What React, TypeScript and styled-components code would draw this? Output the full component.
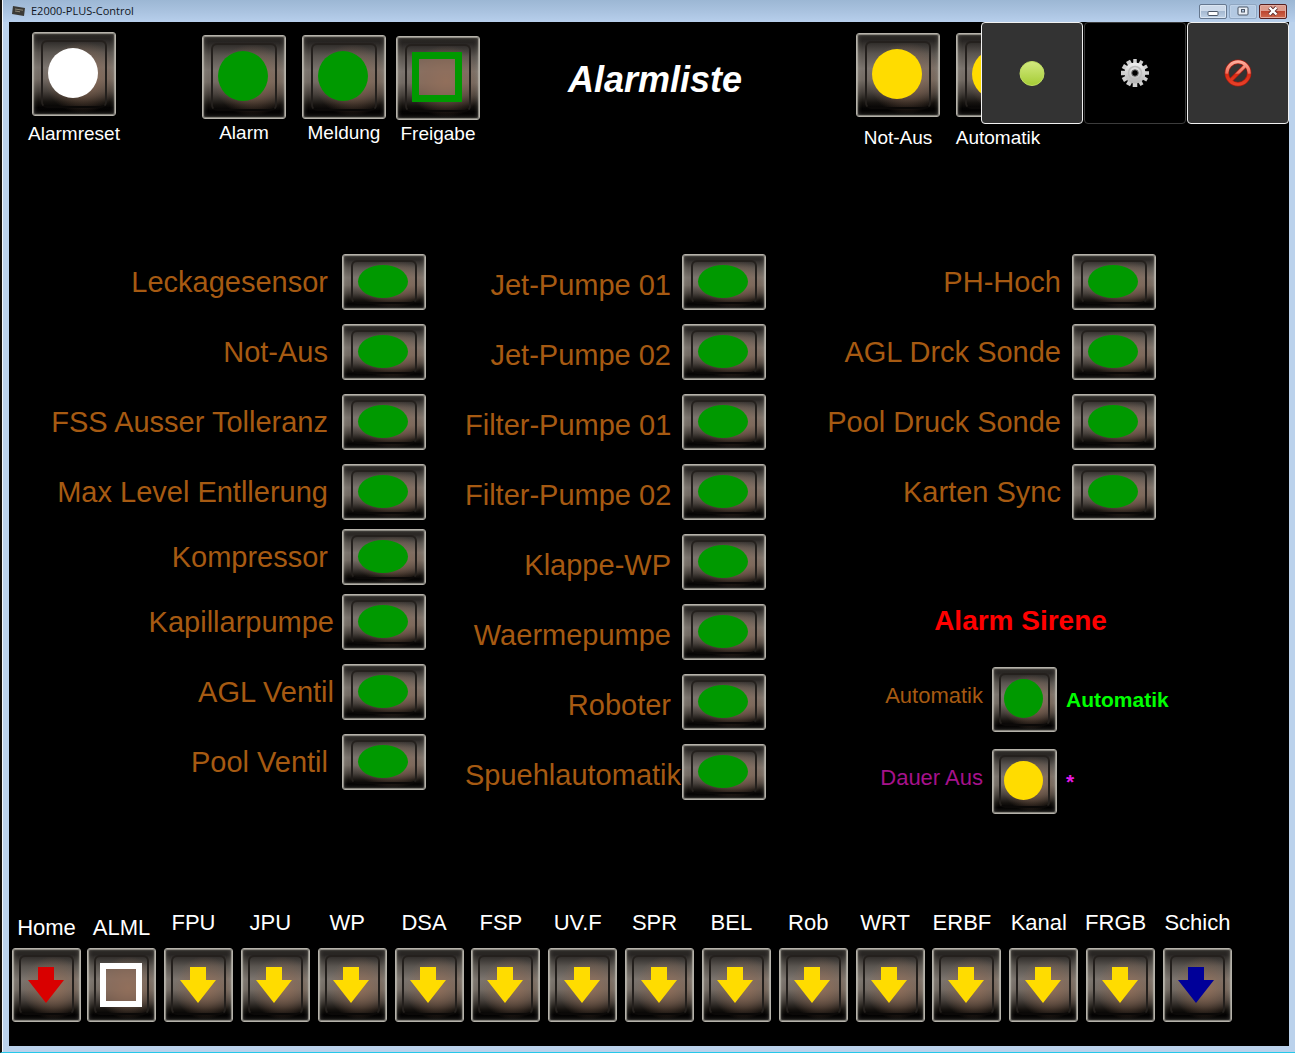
import React, { useId } from "react";
import styled, { createGlobalStyle, css } from "styled-components";

const GlobalStyle = createGlobalStyle`
  *, *::before, *::after { box-sizing: border-box; }
  html, body { margin: 0; padding: 0; background: #000; }
  body { font-family: "Liberation Sans", Arial, Helvetica, sans-serif; }
  button { font: inherit; padding: 0; margin: 0; cursor: pointer; }
`;

const color = {
  green: "#009900",
  yellow: "#ffdc00",
  white: "#ffffff",
  red: "#d90000",
  blue: "#000099",
  brown: "#a65a12",
};

/* ---------- Window frame ---------- */

const Window = styled.div`
  min-height: 100vh;
  display: flex;
  flex-direction: column;
  background: #bbd2ec;
  border-left: 2px solid #15110c;
  border-bottom: 1px solid #25c8ea;
  box-shadow: inset 1px 0 0 #f4f8fc;
  padding: 0 6px 6px 7px;
`;

const TitleBar = styled.header`
  height: 22px;
  margin: 0 -6px 0 -6px;
  padding: 0 8px 0 9px;
  display: flex;
  align-items: center;
  gap: 6px;
  background: linear-gradient(#9cb7d4, #a9c2df 50%, #b7cfec);
  font-family: "Open Sans", "Noto Sans", sans-serif;
  font-size: 11px;
  line-height: 22px;
  color: #10161e;
`;

const TitleText = styled.span`
  flex: 1;
  white-space: nowrap;
`;

const WindowControls = styled.div`
  display: flex;
  gap: 2px;
`;

const WindowButton = styled.button<{ $tone?: "plain" | "faded" | "close" }>`
  width: 28px;
  height: 15px;
  display: flex;
  align-items: center;
  justify-content: center;
  border-radius: 2px;
  border: 1px solid #66788f;
  background: linear-gradient(#cddaea 50%, #a5b9d1 50%, #c0d3e8);
  box-shadow: inset 0 0 0 1px #dbe6f2;
  ${(p) =>
    p.$tone === "faded" &&
    css`
      border-color: #8fa6c1;
      background: #b3c9e2;
      box-shadow: inset 0 0 0 1px #bfd2e8;
    `}
  ${(p) =>
    p.$tone === "close" &&
    css`
      border-color: #57201f;
      background: linear-gradient(#dd9c8d 50%, #bd4630 50%, #cf6a4e);
      box-shadow: inset 0 0 0 1px #e3aca0;
    `}
`;

const Screen = styled.div`
  flex: 1;
  position: relative;
  display: flex;
  flex-direction: column;
  background: #000;
  padding-bottom: 24px;
`;

/* ---------- Illuminated push button ---------- */

type Size = "large" | "wide" | "medium" | "nav";

const tileSize = {
  large: { w: 84, h: 84, inset: 7 },
  wide: { w: 84, h: 56, inset: 5 },
  medium: { w: 65, h: 65, inset: 5 },
  nav: { w: 69, h: 74, inset: 6 },
};

const lampSize = {
  large: { w: 50, h: 50, ring: 7 },
  wide: { w: 50, h: 33, ring: 6 },
  medium: { w: 39, h: 39, ring: 5 },
  nav: { w: 42, h: 44, ring: 6 },
};

const TileButton = styled.button<{ $size: Size }>`
  flex: none;
  width: ${(p) => tileSize[p.$size].w}px;
  height: ${(p) => tileSize[p.$size].h}px;
  position: relative;
  display: flex;
  align-items: center;
  justify-content: center;
  padding: 0 2px ${(p) => (p.$size === "nav" ? 0 : 2)}px 0;
  border: 1px solid #b5b2aa;
  border-radius: 3px;
  background:
    radial-gradient(ellipse 46% 44% at 60% 54%, rgba(150, 112, 88, 0.85), rgba(134, 102, 82, 0.5) 55%, transparent),
    linear-gradient(#1d1b19, #2b2826 9%, #5a5550 24%, #7b746e 42%, #736b64 56%, #47413c 71%, #15120f 84%, #040303 91%, #060505);
  box-shadow:
    inset 0 0 1px 1px rgba(200, 196, 186, 0.65),
    inset 0 0 4px 1px rgba(190, 186, 176, 0.3);

  &::before {
    content: "";
    position: absolute;
    inset: ${(p) => tileSize[p.$size].inset}px ${(p) => (p.$size === "nav" || p.$size === "medium" ? 6 : 8)}px;
    border: 2px solid #24201d;
    border-bottom-color: #0b0908;
    border-radius: 6px;
  }
`;

const Lamp = styled.span<{ $size: Size; $color: string; $shape: "disc" | "frame" }>`
  position: relative;
  width: ${(p) => lampSize[p.$size].w}px;
  height: ${(p) => lampSize[p.$size].h}px;
  ${(p) =>
    p.$shape === "disc"
      ? css`
          border-radius: 50%;
          background: ${p.$color};
        `
      : css`
          border: ${lampSize[p.$size].ring}px solid ${p.$color};
          background: rgba(146, 112, 92, 0.55);
        `}
`;

const ArrowSvg = styled.svg`
  position: relative;
  display: block;
`;

const Arrow = ({ fill }: { fill: string }) => (
  <ArrowSvg width="36" height="36" viewBox="0 0 36 36" aria-hidden="true">
    <path d="M10 0H26V13H36L18 36L0 13H10Z" fill={fill} />
  </ArrowSvg>
);

type TileProps = {
  size: Size;
  tint: string;
  shape?: "disc" | "frame" | "arrow";
  labelledBy: string;
};

const Tile = ({ size, tint, shape = "disc", labelledBy }: TileProps) => (
  <TileButton type="button" $size={size} aria-labelledby={labelledBy}>
    {shape === "arrow" ? <Arrow fill={tint} /> : <Lamp $size={size} $color={tint} $shape={shape} />}
  </TileButton>
);

/* ---------- Top bar ---------- */

const TopBar = styled.div`
  display: flex;
  align-items: flex-start;
  padding: 10px 249px 0 23px;
`;

const TopGroup = styled.div<{ $drop?: number; $before?: number; $labelGap: number }>`
  display: flex;
  gap: 16px;
  padding-top: ${(p) => p.$drop ?? 0}px;
  margin-left: ${(p) => p.$before ?? 0}px;
  --label-gap: ${(p) => p.$labelGap}px;
`;

const TopItemBox = styled.div`
  width: 84px;
  display: flex;
  flex-direction: column;
  align-items: center;
  gap: var(--label-gap);
`;

const TopLabel = styled.span`
  font-size: 19px;
  line-height: 22px;
  color: #fff;
  white-space: nowrap;
`;

const Title = styled.h1`
  flex: 1;
  margin: 0;
  padding: 27px 26px 0 0;
  text-align: center;
  font-size: 36px;
  line-height: 42px;
  font-style: italic;
  font-weight: 700;
  color: #fff;
`;

const TopItem = ({ label, tint, shape }: { label: string; tint: string; shape?: "disc" | "frame" }) => {
  const id = useId();
  return (
    <TopItemBox>
      <Tile size="large" tint={tint} shape={shape} labelledBy={id} />
      <TopLabel id={id}>{label}</TopLabel>
    </TopItemBox>
  );
};

/* ---------- Overlay toolbar ---------- */

const Overlay = styled.div`
  position: absolute;
  top: 0;
  right: 0;
  display: flex;
  gap: 1px;
`;

const OverlayButton = styled.button<{ $dark?: boolean }>`
  width: 102px;
  height: 102px;
  display: flex;
  align-items: center;
  justify-content: center;
  border-radius: 4px;
  border: 1px solid ${(p) => (p.$dark ? "#3c3c3c" : "#f2f2f2")};
  background: ${(p) => (p.$dark ? "#000" : "#333")};
`;

const StatusIcon = () => (
  <svg width="28" height="28" viewBox="0 0 28 28" aria-hidden="true">
    <defs>
      <linearGradient id="statusFill" x1="0" y1="0" x2="0" y2="1">
        <stop offset="0" stopColor="#d3ea80" />
        <stop offset="1" stopColor="#a5cc35" />
      </linearGradient>
    </defs>
    <circle cx="14" cy="14.5" r="12" fill="url(#statusFill)" stroke="#c0de62" />
  </svg>
);

const GearIcon = () => (
  <svg width="28" height="28" viewBox="0 0 28 28" aria-hidden="true">
    <defs>
      <linearGradient id="gearFill" x1="0" y1="0" x2="0" y2="1">
        <stop offset="0" stopColor="#f0f0f0" />
        <stop offset="1" stopColor="#b4b4b4" />
      </linearGradient>
    </defs>
    <g fill="url(#gearFill)">
      {[0, 30, 60, 90, 120, 150].map((a) => (
        <path key={a} d="M12.3 0H15.7L16.3 28H11.7Z" transform={`rotate(${a} 14 14)`} fill="#d0d0d0" />
      ))}
      <circle cx="14" cy="14" r="10.5" />
    </g>
    <circle cx="14" cy="14" r="6.5" fill="none" stroke="#bcbcbc" strokeWidth="1.5" />
    <circle cx="14" cy="14" r="3.3" fill="#000" stroke="#777" />
  </svg>
);

const BlockIcon = () => (
  <svg width="28" height="28" viewBox="0 0 28 28" aria-hidden="true">
    <defs>
      <linearGradient id="blockStroke" gradientUnits="userSpaceOnUse" x1="0" y1="1" x2="0" y2="27">
        <stop offset="0" stopColor="#ffb4a4" />
        <stop offset="0.5" stopColor="#f0705c" />
        <stop offset="0.56" stopColor="#dc2c14" />
        <stop offset="1" stopColor="#e8442c" />
      </linearGradient>
    </defs>
    <g fill="none" strokeLinecap="butt">
      <circle cx="14" cy="14" r="11.2" stroke="#a81d10" strokeWidth="4.4" />
      <path d="M21.5 6.5L6.5 21.5" stroke="#a81d10" strokeWidth="4.4" />
      <circle cx="14" cy="14" r="11.2" stroke="url(#blockStroke)" strokeWidth="3" />
      <path d="M21.5 6.5L6.5 21.5" stroke="url(#blockStroke)" strokeWidth="3" />
    </g>
  </svg>
);

/* ---------- Alarm lists ---------- */

const Main = styled.main`
  display: grid;
  grid-template-columns: 417fr 340fr 390fr 133fr;
  grid-template-rows: auto 1fr;
  padding-top: 105px;
`;

const AlarmColumn = styled.section<{ $tall?: boolean }>`
  display: flex;
  flex-direction: column;
  gap: 9px;
  grid-row: ${(p) => (p.$tall ? "1 / span 2" : "1")};
`;

const AlarmGroup = styled.ul`
  list-style: none;
  margin: 0;
  padding: 0;
  display: flex;
  flex-direction: column;
  gap: 14px;
`;

type Spacing = "wide" | "normal" | "near";

const rowGap = { wide: 14, normal: 11, near: 8 };

const AlarmRow = styled.li<{ $spacing: Spacing }>`
  height: 56px;
  display: flex;
  align-items: center;
  justify-content: flex-end;
  gap: ${(p) => rowGap[p.$spacing]}px;
`;

const AlarmLabel = styled.span<{ $narrow?: boolean }>`
  ${(p) =>
    p.$narrow &&
    css`
      width: 206px;
      padding-top: 6px;
    `}
  text-align: right;
  font-size: 29px;
  line-height: 34px;
  color: ${color.brown};
  white-space: nowrap;
`;

type Alarm = { name: string; spacing: Spacing };

const AlarmEntry = ({ alarm, narrow }: { alarm: Alarm; narrow?: boolean }) => {
  const id = useId();
  return (
    <AlarmRow $spacing={alarm.spacing}>
      <AlarmLabel id={id} $narrow={narrow}>
        {alarm.name}
      </AlarmLabel>
      <Tile size="wide" tint={color.green} labelledBy={id} />
    </AlarmRow>
  );
};

const alarms = (spacing: Spacing, ...names: string[]): Alarm[] => names.map((name) => ({ name, spacing }));

const systemAlarms: Alarm[][] = [
  alarms("wide", "Leckagesensor", "Not-Aus", "FSS Ausser Tolleranz", "Max Level Entllerung"),
  alarms("wide", "Kompressor"),
  [...alarms("near", "Kapillarpumpe", "AGL Ventil"), ...alarms("wide", "Pool Ventil")],
];

const pumpAlarms = alarms(
  "normal",
  "Jet-Pumpe 01",
  "Jet-Pumpe 02",
  "Filter-Pumpe 01",
  "Filter-Pumpe 02",
  "Klappe-WP",
  "Waermepumpe",
  "Roboter",
  "Spuehlautomatik",
);

const sensorAlarms = alarms("normal", "PH-Hoch", "AGL Drck Sonde", "Pool Druck Sonde", "Karten Sync");

/* ---------- Siren panel ---------- */

const Siren = styled.section`
  grid-column: 3 / span 2;
  grid-row: 2;
  padding: 85px 6px 0 0;
`;

const SirenTitle = styled.h2`
  margin: 0 0 30px;
  padding-right: 8px;
  text-align: center;
  font-size: 28px;
  line-height: 32px;
  font-weight: 700;
  color: #ff0000;
`;

const SirenRows = styled.div`
  display: flex;
  flex-direction: column;
  gap: 17px;
`;

const SirenRow = styled.div`
  display: grid;
  grid-template-columns: 1fr auto 1fr;
  column-gap: 9px;
  align-items: center;
`;

const SirenLabel = styled.span<{ $color: string }>`
  padding-bottom: 8px;
  text-align: right;
  font-size: 22px;
  line-height: 26px;
  color: ${(p) => p.$color};
`;

const SirenState = styled.span<{ $color: string }>`
  font-size: 21px;
  line-height: 26px;
  font-weight: 700;
  color: ${(p) => p.$color};
`;

const SirenEntry = (props: { label: string; labelColor: string; tint: string; state: string; stateColor: string }) => {
  const id = useId();
  return (
    <SirenRow>
      <SirenLabel id={id} $color={props.labelColor}>
        {props.label}
      </SirenLabel>
      <Tile size="medium" tint={props.tint} labelledBy={id} />
      <SirenState $color={props.stateColor}>{props.state}</SirenState>
    </SirenRow>
  );
};

/* ---------- Bottom navigation ---------- */

const NavBar = styled.nav`
  margin-top: auto;
  padding: 20px 57px 0 3px;
  display: flex;
  align-items: flex-end;
  gap: 8px;
`;

const NavGroup = styled.div<{ $fill?: boolean }>`
  display: flex;
  gap: 6px;
  ${(p) =>
    p.$fill &&
    css`
      flex: 1;
      justify-content: space-between;
    `}
`;

const NavItemBox = styled.div<{ $raised: boolean }>`
  width: 69px;
  display: flex;
  flex-direction: column;
  align-items: center;
  gap: ${(p) => (p.$raised ? 12 : 7)}px;
`;

const NavLabel = styled.span<{ $lean: boolean }>`
  padding-right: ${(p) => (p.$lean ? 10 : 0)}px;
  font-size: 22px;
  line-height: 26px;
  color: #fff;
  white-space: nowrap;
`;

type NavEntry = { label: string; tint: string; shape: "arrow" | "frame"; raised: boolean; lean: boolean };

const page = (label: string): NavEntry => ({ label, tint: color.yellow, shape: "arrow", raised: true, lean: true });

const mainEntries: NavEntry[] = [
  { label: "Home", tint: color.red, shape: "arrow", raised: false, lean: false },
  { label: "ALML", tint: color.white, shape: "frame", raised: false, lean: false },
];

const pageEntries: NavEntry[] = [
  ...["FPU", "JPU", "WP", "DSA", "FSP", "UV.F", "SPR", "BEL", "Rob", "WRT", "ERBF", "Kanal", "FRGB"].map(page),
  { label: "Schich", tint: color.blue, shape: "arrow", raised: true, lean: false },
];

const NavItem = ({ entry }: { entry: NavEntry }) => {
  const id = useId();
  return (
    <NavItemBox $raised={entry.raised}>
      <NavLabel id={id} $lean={entry.lean}>
        {entry.label}
      </NavLabel>
      <Tile size="nav" tint={entry.tint} shape={entry.shape} labelledBy={id} />
    </NavItemBox>
  );
};

/* ---------- Page ---------- */

export default function App() {
  return (
    <>
      <GlobalStyle />
      <Window>
        <TitleBar>
          <svg width="13" height="10" viewBox="0 0 13 10" aria-hidden="true">
            <path d="M1 0L13 2L12 10L0 8Z" fill="#3b3a36" />
            <path d="M3 3L11 4.2M3 5L8 5.8" stroke="#8c8676" strokeWidth="1" />
          </svg>
          <TitleText>E2000-PLUS-Control</TitleText>
          <WindowControls>
            <WindowButton type="button" aria-label="Minimieren">
              <svg width="12" height="10" viewBox="0 0 12 10" aria-hidden="true">
                <rect x="1" y="5.5" width="10" height="4" rx="1" fill="#fff" stroke="#4b5667" />
              </svg>
            </WindowButton>
            <WindowButton type="button" $tone="faded" aria-label="Maximieren">
              <svg width="12" height="10" viewBox="0 0 12 10" aria-hidden="true">
                <rect x="1" y="1" width="10" height="8" rx="1" fill="#e9eff6" stroke="#4b5667" />
                <rect x="4.5" y="3.5" width="3" height="2.5" fill="#b3c9e2" stroke="#4b5667" />
              </svg>
            </WindowButton>
            <WindowButton type="button" $tone="close" aria-label="Schließen">
              <svg width="12" height="10" viewBox="0 0 12 10" aria-hidden="true">
                <path d="M2.5 1.5L9.5 8.5M9.5 1.5L2.5 8.5" stroke="#5a2a2a" strokeWidth="4" />
                <path d="M2.5 1.5L9.5 8.5M9.5 1.5L2.5 8.5" stroke="#fff" strokeWidth="2.4" />
              </svg>
            </WindowButton>
          </WindowControls>
        </TitleBar>

        <Screen>
          <TopBar>
            <TopGroup $labelGap={7}>
              <TopItem label="Alarmreset" tint={color.white} />
            </TopGroup>
            <TopGroup $drop={3} $before={86} $labelGap={3}>
              <TopItem label="Alarm" tint={color.green} />
              <TopItem label="Meldung" tint={color.green} />
            </TopGroup>
            <TopGroup $drop={4} $before={10} $labelGap={3}>
              <TopItem label="Freigabe" tint={color.green} shape="frame" />
            </TopGroup>
            <Title>Alarmliste</Title>
            <TopGroup $drop={1} $labelGap={10}>
              <TopItem label="Not-Aus" tint={color.yellow} />
              <TopItem label="Automatik" tint={color.yellow} />
            </TopGroup>
          </TopBar>

          <Main>
            <AlarmColumn $tall>
              {systemAlarms.map((group, i) => (
                <AlarmGroup key={i}>
                  {group.map((alarm) => (
                    <AlarmEntry key={alarm.name} alarm={alarm} />
                  ))}
                </AlarmGroup>
              ))}
            </AlarmColumn>
            <AlarmColumn $tall>
              <AlarmGroup>
                {pumpAlarms.map((alarm) => (
                  <AlarmEntry key={alarm.name} alarm={alarm} narrow />
                ))}
              </AlarmGroup>
            </AlarmColumn>
            <AlarmColumn>
              <AlarmGroup>
                {sensorAlarms.map((alarm) => (
                  <AlarmEntry key={alarm.name} alarm={alarm} />
                ))}
              </AlarmGroup>
            </AlarmColumn>
            <Siren>
              <SirenTitle>Alarm Sirene</SirenTitle>
              <SirenRows>
                <SirenEntry
                  label="Automatik"
                  labelColor={color.brown}
                  tint={color.green}
                  state="Automatik"
                  stateColor="#00ff00"
                />
                <SirenEntry
                  label="Dauer Aus"
                  labelColor="#a6128c"
                  tint={color.yellow}
                  state="*"
                  stateColor="#e61ae6"
                />
              </SirenRows>
            </Siren>
          </Main>

          <NavBar>
            <NavGroup>
              {mainEntries.map((entry) => (
                <NavItem key={entry.label} entry={entry} />
              ))}
            </NavGroup>
            <NavGroup $fill>
              {pageEntries.map((entry) => (
                <NavItem key={entry.label} entry={entry} />
              ))}
            </NavGroup>
          </NavBar>

          <Overlay>
            <OverlayButton type="button" aria-label="Status">
              <StatusIcon />
            </OverlayButton>
            <OverlayButton type="button" $dark aria-label="Einstellungen">
              <GearIcon />
            </OverlayButton>
            <OverlayButton type="button" aria-label="Sperren">
              <BlockIcon />
            </OverlayButton>
          </Overlay>
        </Screen>
      </Window>
    </>
  );
}
